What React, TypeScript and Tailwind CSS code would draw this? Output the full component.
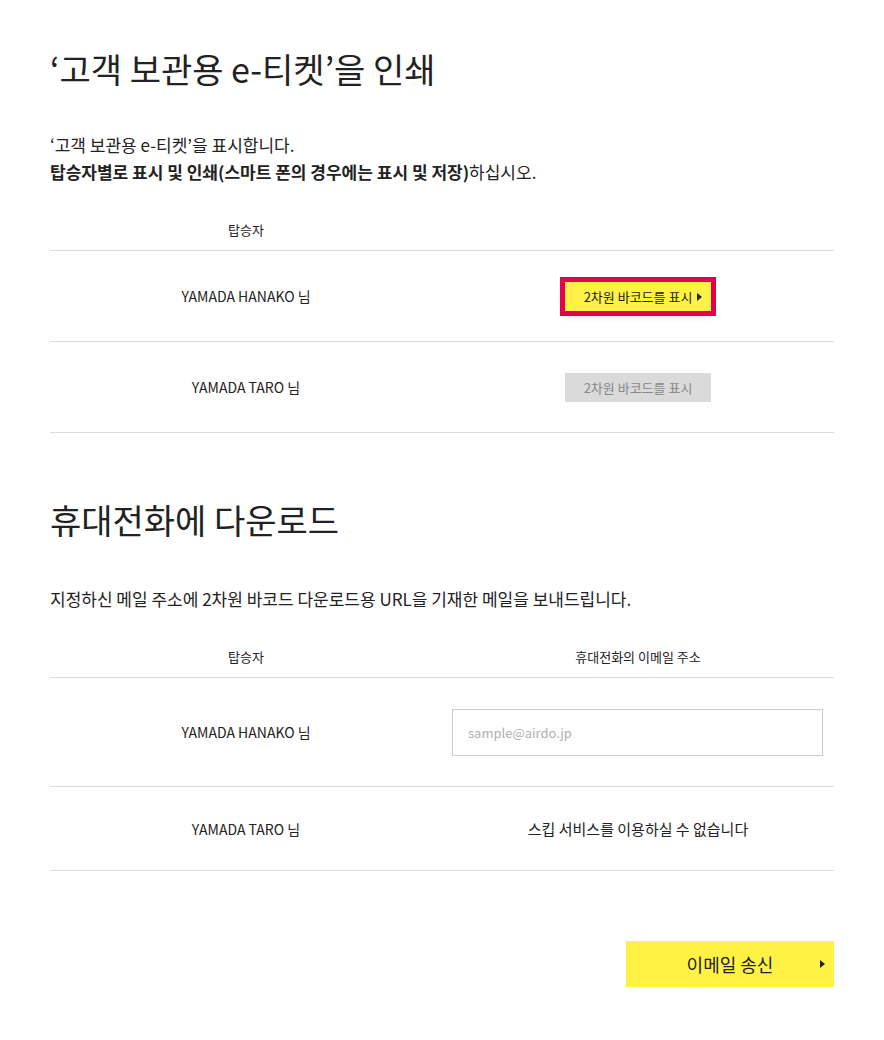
import React from 'react';

const font = { fontFamily: '"Noto Sans CJK KR", "Noto Sans", sans-serif' };

function Caret({ className = '' }: { className?: string }) {
  return (
    <svg width="5" height="8" viewBox="0 0 5 8" className={className}>
      <path d="M0 0L5 4L0 8Z" fill="#222" />
    </svg>
  );
}

function Row({ left, right, className = '' }: { left: React.ReactNode; right: React.ReactNode; className?: string }) {
  return (
    <div className={`grid grid-cols-2 border-b border-[#dcdcdc] ${className}`}>
      <div className="flex items-center justify-center text-[14px] text-[#222]">{left}</div>
      <div className="flex items-center justify-center">{right}</div>
    </div>
  );
}

export default function App() {
  return (
    <main className="min-h-[1040px] bg-white text-[#222]" style={font}>
      <div className="mx-[50px] w-[784px] pt-[45px]">
        <h1 className="text-[34px] leading-[48px] font-normal">‘고객 보관용 e-티켓’을 인쇄</h1>
        <div className="mt-[38px] text-[17px] leading-[27px]">
          <p>‘고객 보관용 e-티켓’을 표시합니다.</p>
          <p>
            <span className="font-bold">탑승자별로 표시 및 인쇄(스마트 폰의 경우에는 표시 및 저장)</span>하십시오.
          </p>
        </div>

        <div className="mt-[35px] grid grid-cols-2 border-b border-[#dcdcdc] pb-[10px] text-[13px] leading-[20px]">
          <div className="text-center">탑승자</div>
          <div />
        </div>
        <Row
          className="pt-[31px] pb-[30px]"
          left="YAMADA HANAKO 님"
          right={
            <button className="relative flex h-[29px] w-[146px] items-center justify-center bg-[#fff245] text-[13px] text-[#222] outline-[5px] outline-[#e5004f] shadow-[0_3px_8px_rgba(0,0,0,0.3)]">
              2차원 바코드를 표시
              <Caret className="absolute right-[9px] top-[10.5px]" />
            </button>
          }
        />
        <Row
          className="pt-[31px] pb-[30px]"
          left="YAMADA TARO 님"
          right={
            <div className="flex h-[29px] w-[146px] items-center justify-center bg-[#dadada] text-[13px] text-[#888]">
              2차원 바코드를 표시
            </div>
          }
        />

        <h2 className="mt-[63px] text-[34px] leading-[48px] font-normal">휴대전화에 다운로드</h2>
        <p className="mt-[41px] text-[17px] leading-[27px]">
          지정하신 메일 주소에 2차원 바코드 다운로드용 URL을 기재한 메일을 보내드립니다.
        </p>

        <div className="mt-[35px] grid grid-cols-2 border-b border-[#dcdcdc] pb-[10px] text-[13px] leading-[20px]">
          <div className="text-center">탑승자</div>
          <div className="text-center">휴대전화의 이메일 주소</div>
        </div>
        <Row
          className="pt-[31px] pb-[30px]"
          left="YAMADA HANAKO 님"
          right={
            <div className="w-full pl-[10px] pr-[11px]">
              <input
                placeholder="sample@airdo.jp"
                className="h-[47px] w-full border border-[#cccccc] px-[15px] text-[13px] text-[#222] placeholder:text-[#b0b0b0] outline-none"
                style={font}
              />
            </div>
          }
        />
        <Row
          className="pt-[31px] pb-[30px]"
          left="YAMADA TARO 님"
          right={<span className="text-[15px] leading-[22px]">스킵 서비스를 이용하실 수 없습니다</span>}
        />

        <div className="mt-[70px] flex justify-end">
          <button className="relative flex h-[46px] w-[208px] items-center justify-center bg-[#fff245] text-[18px] text-[#222]">
            이메일 송신
            <Caret className="absolute right-[9px] top-[19px]" />
          </button>
        </div>
      </div>
    </main>
  );
}
